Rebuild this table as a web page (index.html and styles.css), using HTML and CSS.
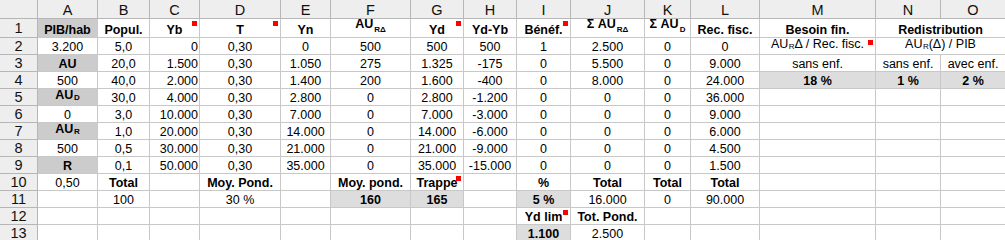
FILE: index.html
```html
<!DOCTYPE html>
<html lang="fr">
<head>
<meta charset="utf-8">
<title>Feuille</title>
<link rel="stylesheet" href="styles.css">
</head>
<body>
<div class="sheet">
  <div class="corner"></div>
  <div class="colh">A</div><div class="colh">B</div><div class="colh">C</div><div class="colh">D</div><div class="colh">E</div><div class="colh">F</div><div class="colh">G</div><div class="colh">H</div><div class="colh">I</div><div class="colh">J</div><div class="colh">K</div><div class="colh">L</div><div class="colh">M</div><div class="colh">N</div><div class="colh">O</div>

  <div class="rowh">1</div>
  <div class="c b gA">PIB/hab</div>
  <div class="c b">Popul.</div>
  <div class="c b note">Yb</div>
  <div class="c b note">T</div>
  <div class="c b">Yn</div>
  <div class="c b"><span>AU<span class="subh">RΔ</span></span></div>
  <div class="c b note">Yd</div>
  <div class="c b">Yd-Yb</div>
  <div class="c b note">Bénéf.</div>
  <div class="c b"><span>Σ AU<span class="subh">RΔ</span></span></div>
  <div class="c b"><span>Σ AU<span class="subh">D</span></span></div>
  <div class="c b">Rec. fisc.</div>
  <div class="c b">Besoin fin.</div>
  <div class="c b span2">Redistribution</div>

  <div class="rowh">2</div>
  <div class="c">3.200</div>
  <div class="c">5,0</div>
  <div class="c r">0</div>
  <div class="c">0,30</div>
  <div class="c">0</div>
  <div class="c">500</div>
  <div class="c">500</div>
  <div class="c">500</div>
  <div class="c">1</div>
  <div class="c">2.500</div>
  <div class="c">0</div>
  <div class="c">0</div>
  <div class="c note"><span>AU<span class="subs">R</span>Δ / Rec. fisc.</span></div>
  <div class="c span2"><span>AU<span class="subs">R</span>(Δ) / PIB</span></div>

  <div class="rowh">3</div>
  <div class="c b gA">AU</div>
  <div class="c">20,0</div>
  <div class="c r">1.500</div>
  <div class="c">0,30</div>
  <div class="c">1.050</div>
  <div class="c">275</div>
  <div class="c">1.325</div>
  <div class="c">-175</div>
  <div class="c">0</div>
  <div class="c">5.500</div>
  <div class="c">0</div>
  <div class="c">9.000</div>
  <div class="c">sans enf.</div>
  <div class="c">sans enf.</div>
  <div class="c">avec enf.</div>

  <div class="rowh">4</div>
  <div class="c">500</div>
  <div class="c">40,0</div>
  <div class="c r">2.000</div>
  <div class="c">0,30</div>
  <div class="c">1.400</div>
  <div class="c">200</div>
  <div class="c">1.600</div>
  <div class="c">-400</div>
  <div class="c">0</div>
  <div class="c">8.000</div>
  <div class="c">0</div>
  <div class="c">24.000</div>
  <div class="c b gB">18 %</div>
  <div class="c b gB">1 %</div>
  <div class="c b gB">2 %</div>

  <div class="rowh">5</div>
  <div class="c b gA"><span>AU<span class="subs">D</span></span></div>
  <div class="c">30,0</div>
  <div class="c r">4.000</div>
  <div class="c">0,30</div>
  <div class="c">2.800</div>
  <div class="c">0</div>
  <div class="c">2.800</div>
  <div class="c">-1.200</div>
  <div class="c">0</div>
  <div class="c">0</div>
  <div class="c">0</div>
  <div class="c">36.000</div>
  <div class="c"></div>
  <div class="c"></div>
  <div class="c"></div>

  <div class="rowh">6</div>
  <div class="c">0</div>
  <div class="c">3,0</div>
  <div class="c r">10.000</div>
  <div class="c">0,30</div>
  <div class="c">7.000</div>
  <div class="c">0</div>
  <div class="c">7.000</div>
  <div class="c">-3.000</div>
  <div class="c">0</div>
  <div class="c">0</div>
  <div class="c">0</div>
  <div class="c">9.000</div>
  <div class="c"></div>
  <div class="c"></div>
  <div class="c"></div>

  <div class="rowh">7</div>
  <div class="c b gA"><span>AU<span class="subs">R</span></span></div>
  <div class="c">1,0</div>
  <div class="c r">20.000</div>
  <div class="c">0,30</div>
  <div class="c">14.000</div>
  <div class="c">0</div>
  <div class="c">14.000</div>
  <div class="c">-6.000</div>
  <div class="c">0</div>
  <div class="c">0</div>
  <div class="c">0</div>
  <div class="c">6.000</div>
  <div class="c"></div>
  <div class="c"></div>
  <div class="c"></div>

  <div class="rowh">8</div>
  <div class="c">500</div>
  <div class="c">0,5</div>
  <div class="c r">30.000</div>
  <div class="c">0,30</div>
  <div class="c">21.000</div>
  <div class="c">0</div>
  <div class="c">21.000</div>
  <div class="c">-9.000</div>
  <div class="c">0</div>
  <div class="c">0</div>
  <div class="c">0</div>
  <div class="c">4.500</div>
  <div class="c"></div>
  <div class="c"></div>
  <div class="c"></div>

  <div class="rowh">9</div>
  <div class="c b gA">R</div>
  <div class="c">0,1</div>
  <div class="c r">50.000</div>
  <div class="c">0,30</div>
  <div class="c">35.000</div>
  <div class="c">0</div>
  <div class="c">35.000</div>
  <div class="c">-15.000</div>
  <div class="c">0</div>
  <div class="c">0</div>
  <div class="c">0</div>
  <div class="c">1.500</div>
  <div class="c"></div>
  <div class="c"></div>
  <div class="c"></div>

  <div class="rowh">10</div>
  <div class="c">0,50</div>
  <div class="c b">Total</div>
  <div class="c"></div>
  <div class="c b">Moy. Pond.</div>
  <div class="c"></div>
  <div class="c b">Moy. pond.</div>
  <div class="c b note">Trappe</div>
  <div class="c"></div>
  <div class="c b">%</div>
  <div class="c b">Total</div>
  <div class="c b">Total</div>
  <div class="c b">Total</div>
  <div class="c"></div>
  <div class="c"></div>
  <div class="c"></div>

  <div class="rowh">11</div>
  <div class="c"></div>
  <div class="c">100</div>
  <div class="c"></div>
  <div class="c">30 %</div>
  <div class="c"></div>
  <div class="c b gB">160</div>
  <div class="c b gB">165</div>
  <div class="c"></div>
  <div class="c b gB">5 %</div>
  <div class="c">16.000</div>
  <div class="c">0</div>
  <div class="c">90.000</div>
  <div class="c"></div>
  <div class="c"></div>
  <div class="c"></div>

  <div class="rowh">12</div>
  <div class="c"></div>
  <div class="c"></div>
  <div class="c"></div>
  <div class="c"></div>
  <div class="c"></div>
  <div class="c"></div>
  <div class="c"></div>
  <div class="c"></div>
  <div class="c b note">Yd lim</div>
  <div class="c b">Tot. Pond.</div>
  <div class="c"></div>
  <div class="c"></div>
  <div class="c"></div>
  <div class="c"></div>
  <div class="c"></div>

  <div class="rowh">13</div>
  <div class="c"></div>
  <div class="c"></div>
  <div class="c"></div>
  <div class="c"></div>
  <div class="c"></div>
  <div class="c"></div>
  <div class="c"></div>
  <div class="c"></div>
  <div class="c b gB">1.100</div>
  <div class="c">2.500</div>
  <div class="c"></div>
  <div class="c"></div>
  <div class="c"></div>
  <div class="c"></div>
  <div class="c"></div>
</div>
</body>
</html>
```

FILE: styles.css
```css
html, body {
  margin: 0;
  padding: 0;
  background: #ffffff;
}

body {
  font-family: "Liberation Sans", Arial, sans-serif;
  color: #000000;
  overflow: hidden;
}

.sheet {
  display: grid;
  grid-template-columns: 38px 60px 52px 50px 81px 50px 80px 53px 53px 54px 74px 46px 69px 116px 65px 65px;
  grid-template-rows: 19px 19px repeat(12, 17px);
  width: 1006px;
}

.sheet > div {
  box-sizing: border-box;
  border-right: 1px solid #c8c8c8;
  border-bottom: 1px solid #c8c8c8;
  min-width: 0;
}

.corner,
.colh,
.rowh {
  background: #eeeeee;
  border-color: #b6b6b6 !important;
  display: flex;
  align-items: center;
  justify-content: center;
  font-size: 14.5px;
  line-height: 16px;
  color: #111111;
}

.colh {
  padding-top: 1px;
}

.c {
  position: relative;
  display: flex;
  align-items: flex-end;
  justify-content: center;
  font-size: 12.5px;
  line-height: 14px;
  white-space: nowrap;
  padding: 0 2px;
}

.c.r {
  justify-content: flex-end;
  padding-right: 1px;
}

.b {
  font-weight: bold;
}

.gA {
  background: #cccccc;
}

.gB {
  background: #dddddd;
}

.span2 {
  grid-column: span 2;
}

.subh {
  font-size: 8px;
  vertical-align: -4px;
  margin-left: 1px;
}

.subs {
  font-size: 8px;
  vertical-align: -1px;
  margin-left: 0.5px;
}

.note::after {
  content: "";
  position: absolute;
  top: 2px;
  right: 2px;
  width: 5px;
  height: 5px;
  background: #ff0000;
}
```
